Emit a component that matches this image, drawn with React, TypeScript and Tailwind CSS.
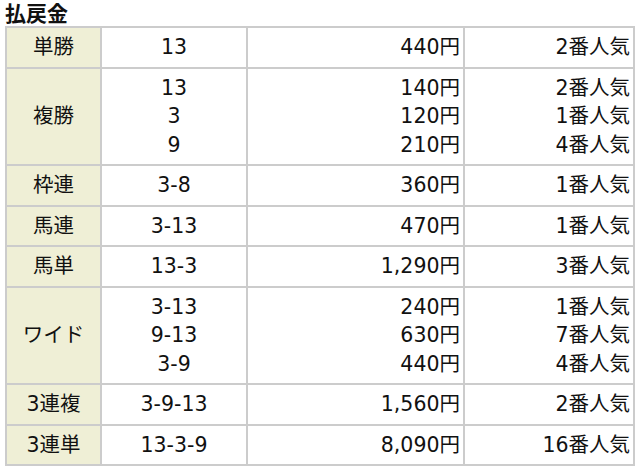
import React from "react";

interface IPayout {
  label: string;
  lines: { combo: string; amount: string; rank: string }[];
}

const payouts: IPayout[] = [
  { label: "単勝", lines: [{ combo: "13", amount: "440円", rank: "2番人気" }] },
  {
    label: "複勝",
    lines: [
      { combo: "13", amount: "140円", rank: "2番人気" },
      { combo: "3", amount: "120円", rank: "1番人気" },
      { combo: "9", amount: "210円", rank: "4番人気" },
    ],
  },
  { label: "枠連", lines: [{ combo: "3-8", amount: "360円", rank: "1番人気" }] },
  { label: "馬連", lines: [{ combo: "3-13", amount: "470円", rank: "1番人気" }] },
  { label: "馬単", lines: [{ combo: "13-3", amount: "1,290円", rank: "3番人気" }] },
  {
    label: "ワイド",
    lines: [
      { combo: "3-13", amount: "240円", rank: "1番人気" },
      { combo: "9-13", amount: "630円", rank: "7番人気" },
      { combo: "3-9", amount: "440円", rank: "4番人気" },
    ],
  },
  { label: "3連複", lines: [{ combo: "3-9-13", amount: "1,560円", rank: "2番人気" }] },
  { label: "3連単", lines: [{ combo: "13-3-9", amount: "8,090円", rank: "16番人気" }] },
];

const cell = "border-2 border-[#cccccc] py-[5px]";

export default function App() {
  return (
    <div
      className="w-[640px] h-[470px] bg-white px-[5px] pt-[2px] text-[#111]"
      style={{ fontFamily: '"DejaVu Sans", "Noto Sans CJK JP", sans-serif' }}
    >
      <h2 className="text-[21px] font-bold leading-[24px]">払戻金</h2>
      <table className="w-[628px] table-fixed border-collapse text-[20.5px] leading-[28.5px]">
        <colgroup>
          <col className="w-[95px]" />
          <col className="w-[146px]" />
          <col className="w-[217px]" />
          <col className="w-[170px]" />
        </colgroup>
        <tbody>
          {payouts.map((item, index) => (
            <tr key={index}>
              <td className={`${cell} bg-[#efefd6] text-center align-middle`}>{item.label}</td>
              <td className={`${cell} text-center`}>
                {item.lines.map((l, i) => (
                  <div key={i}>{l.combo}</div>
                ))}
              </td>
              <td className={`${cell} pr-[3px] text-right`}>
                {item.lines.map((l, i) => (
                  <div key={i}>{l.amount}</div>
                ))}
              </td>
              <td className={`${cell} pr-[3px] text-right`}>
                {item.lines.map((l, i) => (
                  <div key={i}>{l.rank}</div>
                ))}
              </td>
            </tr>
          ))}
        </tbody>
      </table>
    </div>
  );
}
